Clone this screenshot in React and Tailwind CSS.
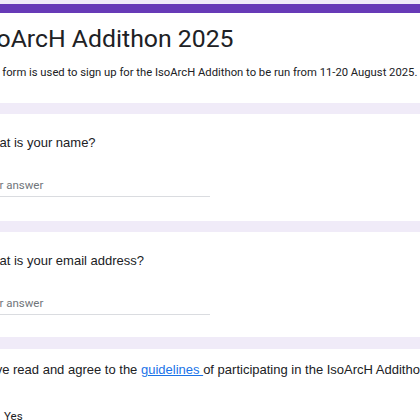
export default function App() {
  const roboto = { fontFamily: 'Roboto, "Liberation Sans", sans-serif' };
  return (
    <div className="w-[420px] h-[420px] overflow-hidden bg-[#f0ebf8]">
      <div className="-ml-[44px] w-[520px] flex flex-col pt-[4px]">
        {/* Header card */}
        <div className="bg-white">
          <div className="h-[9px] bg-[#673ab7]" />
          <div className="px-[24px] pt-[10px] h-[90px]">
            <div className="-ml-[3px] text-[24.8px] leading-[32px] text-[#202124] whitespace-nowrap font-['Roboto',sans-serif]">
              IsoArcH Addithon 2025
            </div>
            <div className="-ml-[2px] mt-[10px] text-[11.25px] leading-[16px] text-[#202124] whitespace-nowrap font-['Roboto',sans-serif]">
              This form is used to sign up for the IsoArcH Addithon to be run from 11-20 August 2025.
            </div>
          </div>
        </div>

        {/* Name */}
        <div className="mt-[11px] bg-white h-[107px] px-[24px] pt-[20px]">
          <div className="text-[13px] leading-[18px] text-[#202124] font-['Liberation_Sans',Arial,sans-serif]">
            What is your name?
          </div>
          <div className="mt-[25px] w-[230px] border-b border-[#dadce0] pb-[3px] text-[11.5px] leading-[16px] text-[#70757a] font-['Roboto',sans-serif]">
            Your answer
          </div>
        </div>

        {/* Email */}
        <div className="mt-[11px] bg-white h-[105px] px-[24px] pt-[20px]">
          <div className="text-[13px] leading-[18px] text-[#202124] font-['Liberation_Sans',Arial,sans-serif]">
            What is your email address?
          </div>
          <div className="mt-[25px] w-[230px] border-b border-[#dadce0] pb-[3px] text-[11.5px] leading-[16px] text-[#70757a] font-['Roboto',sans-serif]">
            Your answer
          </div>
        </div>

        {/* Guidelines */}
        <div className="mt-[12px] bg-white h-[120px] px-[24px] pt-[12px]">
          <div className="-ml-[6px] text-[13px] leading-[18px] text-[#202124] whitespace-nowrap font-['Liberation_Sans',Arial,sans-serif]">
            I have read and agree to the{' '}
            <a className="text-[#1a73e8] underline">guidelines </a>
            of participating in the IsoArcH Addithon 2025.
          </div>
          <div className="mt-[29px] flex items-center gap-[10px]">
            <div className="w-[14px] h-[14px] border-2 border-[#5f6368] rounded-[2px]" />
            <span className="text-[11.5px] leading-[16px] text-[#202124]" style={roboto}>Yes</span>
          </div>
        </div>
      </div>
    </div>
  );
}
